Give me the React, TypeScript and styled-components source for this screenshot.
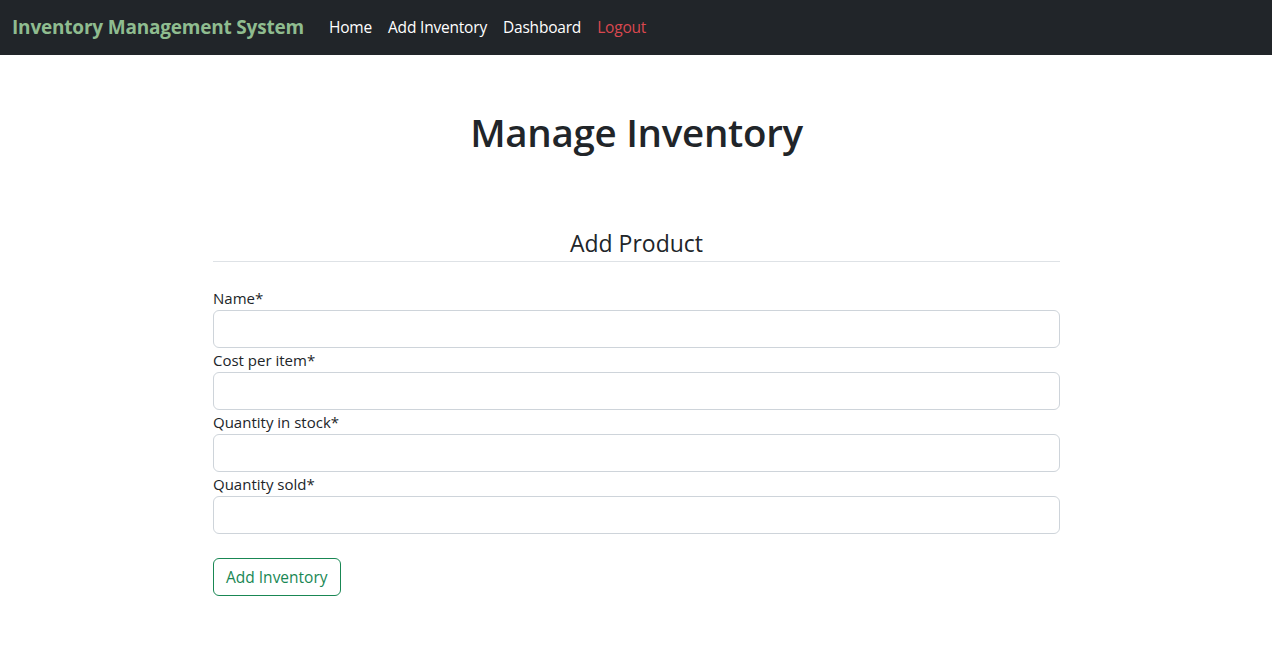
import React from "react";
import styled, { createGlobalStyle } from "styled-components";

const GlobalStyle = createGlobalStyle`
  * { box-sizing: border-box; }
  body {
    margin: 0;
    font-family: "Open Sans", "Noto Sans", "Liberation Sans", sans-serif;
    font-size: 16px;
    line-height: 1.5;
    color: #212529;
    background: #fff;
  }
`;

const Navbar = styled.nav`
  display: flex;
  align-items: center;
  height: 55px;
  padding: 0 12px;
  background-color: #212529;
`;

const Brand = styled.a`
  font-size: 19px;
  font-weight: 700;
  color: #8fbc8f;
  text-decoration: none;
  margin-right: 17px;
  letter-spacing: -0.2px;
`;

const NavList = styled.ul`
  display: flex;
  list-style: none;
  margin: 0;
  padding: 0;
`;

const NavLink = styled.a<{ $danger?: boolean }>`
  display: block;
  padding: 8px 8px;
  font-size: 15.5px;
  color: ${(p) => (p.$danger ? "#d9484f" : "#fff")};
  text-decoration: none;
  letter-spacing: -0.2px;
`;

const Main = styled.main`
  width: 848px;
  margin: 0 auto;
  padding: 54px 0 0 1px;
`;

const Title = styled.h1`
  margin: 0 0 75px;
  text-align: center;
  font-size: 38.5px;
  font-weight: 600;
  line-height: 1.2;
  letter-spacing: -0.3px;
`;

const SectionTitle = styled.h3`
  margin: 0;
  text-align: center;
  font-size: 23px;
  font-weight: 400;
  line-height: 1.2;
`;

const Divider = styled.hr`
  margin: 3px 0 24px;
  border: 0;
  border-top: 1px solid #dee2e6;
`;

const Form = styled.form`
  display: flex;
  flex-direction: column;
`;

const Label = styled.label`
  display: block;
  font-size: 15px;
  line-height: 24px;
`;

const Input = styled.input`
  display: block;
  width: 100%;
  height: 38px;
  padding: 6px 12px;
  font: inherit;
  border: 1px solid #ced4da;
  border-radius: 6px;
  background: #fff;
`;

const Button = styled.button`
  align-self: flex-start;
  margin-top: 24px;
  height: 38px;
  padding: 0 12px;
  font-family: inherit;
  font-size: 15.5px;
  color: #198754;
  background: transparent;
  border: 1px solid #198754;
  border-radius: 6px;
`;

const fields = ["Name*", "Cost per item*", "Quantity in stock*", "Quantity sold*"];

export default function App() {
  return (
    <>
      <GlobalStyle />
      <Navbar>
        <Brand href="#">Inventory Management System</Brand>
        <NavList>
          <li><NavLink href="#">Home</NavLink></li>
          <li><NavLink href="#">Add Inventory</NavLink></li>
          <li><NavLink href="#">Dashboard</NavLink></li>
          <li><NavLink href="#" $danger>Logout</NavLink></li>
        </NavList>
      </Navbar>
      <Main>
        <Title>Manage Inventory</Title>
        <SectionTitle>Add Product</SectionTitle>
        <Divider />
        <Form onSubmit={(e) => e.preventDefault()}>
          {fields.map((f) => (
            <div key={f}>
              <Label>{f}</Label>
              <Input type="text" />
            </div>
          ))}
          <Button type="submit">Add Inventory</Button>
        </Form>
      </Main>
    </>
  );
}
